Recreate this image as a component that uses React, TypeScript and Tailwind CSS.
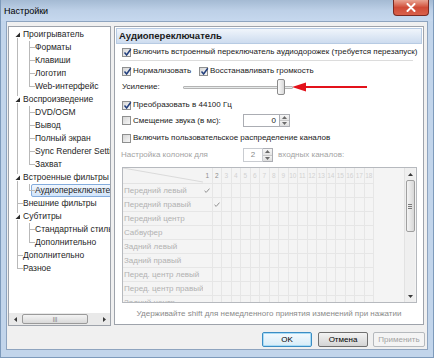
import React from "react";

type TreeItem = {
  label: string;
  child?: boolean;
  root: "down" | "full" | "up";
  branch?: "full" | "up";
  open?: boolean;
  selected?: boolean;
};

const tree: TreeItem[] = [
  { label: "Проигрыватель", root: "down", open: true },
  { label: "Форматы", child: true, root: "full", branch: "full" },
  { label: "Клавиши", child: true, root: "full", branch: "full" },
  { label: "Логотип", child: true, root: "full", branch: "full" },
  { label: "Web-интерфейс", child: true, root: "full", branch: "up" },
  { label: "Воспроизведение", root: "full", open: true },
  { label: "DVD/OGM", child: true, root: "full", branch: "full" },
  { label: "Вывод", child: true, root: "full", branch: "full" },
  { label: "Полный экран", child: true, root: "full", branch: "full" },
  { label: "Sync Renderer Settings", child: true, root: "full", branch: "full" },
  { label: "Захват", child: true, root: "full", branch: "up" },
  { label: "Встроенные фильтры", root: "full", open: true },
  { label: "Аудиопереключатель", child: true, root: "full", branch: "up", selected: true },
  { label: "Внешние фильтры", root: "full" },
  { label: "Субтитры", root: "full", open: true },
  { label: "Стандартный стиль", child: true, root: "full", branch: "full" },
  { label: "Дополнительно", child: true, root: "full", branch: "up" },
  { label: "Дополнительно", root: "full" },
  { label: "Разное", root: "up" },
];

const channels = [
  "Передний левый",
  "Передний правый",
  "Передний центр",
  "Сабвуфер",
  "Задний левый",
  "Задний правый",
  "Перед. центр левый",
  "Перед. центр правый",
  "Задний центр",
];

const cols = Array.from({ length: 18 }, (_, i) => i + 1);

const vline = {
  full: "top-0 bottom-0",
  down: "top-[6px] bottom-0",
  up: "top-0 h-[7px]",
};

function Gutter({ line, tick, open }: { line: "full" | "down" | "up"; tick?: boolean; open?: boolean }) {
  return (
    <span className="relative h-full w-[12px] shrink-0">
      <span className={`absolute left-[6px] w-px bg-[#b9b9b9] ${vline[line]}`} />
      {tick && <span className="absolute left-[6px] top-[6px] h-px w-[6px] bg-[#b9b9b9]" />}
      {open && (
        <svg className="absolute left-[3px] top-[3px] bg-white" width="7" height="7" viewBox="0 0 7 7">
          <path d="M6 1.5 L6 6 L1.5 6 Z" fill="#2b2b2b" />
        </svg>
      )}
    </span>
  );
}

function Check({ checked }: { checked?: boolean }) {
  return (
    <span className="relative flex h-[9px] w-[9px] shrink-0 items-center justify-center border border-[#8e8f8f] bg-gradient-to-br from-[#d6d6d6] to-[#f7f7f7]">
      {checked && (
        <svg className="absolute -top-[1px] left-0" width="9" height="9" viewBox="0 0 9 9">
          <path d="M1.5 4.6 L3.6 7 L7.8 1.2" stroke="#24407e" strokeWidth="1.5" fill="none" />
        </svg>
      )}
    </span>
  );
}

function SpinButtons() {
  return (
    <div className="flex w-[10px] flex-col border border-l-0 border-[#abadb3]">
      <div className="flex flex-1 items-center justify-center border-b border-[#c8c8c8] bg-gradient-to-b from-[#f7f7f7] to-[#e3e3e3]">
        <svg width="5" height="3" viewBox="0 0 5 3">
          <path d="M0 3 L2.5 0 L5 3 Z" fill="#6a6a6a" />
        </svg>
      </div>
      <div className="flex flex-1 items-center justify-center bg-gradient-to-b from-[#f2f2f2] to-[#dedede]">
        <svg width="5" height="3" viewBox="0 0 5 3">
          <path d="M0 0 L5 0 L2.5 3 Z" fill="#6a6a6a" />
        </svg>
      </div>
    </div>
  );
}

function Row({ className, children }: { className: string; children: React.ReactNode }) {
  return <div className={`flex items-center whitespace-nowrap ${className}`}>{children}</div>;
}

export default function App() {
  return (
    <div className="flex h-[358px] w-[434px] flex-col overflow-hidden border border-t-0 border-[#7d9abb] bg-[#c2d5eb] font-['Liberation_Sans',Arial,sans-serif] text-[8px] text-[#1a1a1a]">
      {/* title bar */}
      <div className="flex h-[21px] shrink-0 items-start justify-between bg-gradient-to-b from-[#a4bad3] via-[#bdd0e7] to-[#c6d8ee]">
        <span className="mt-[5px] pl-[3px] text-[9px] text-black">Настройки</span>
        <div className="mr-[4px] flex h-[16px] w-[36px] items-center justify-center rounded-b-[4px] border border-t-0 border-[#7a2a22] bg-gradient-to-b from-[#e8a493] via-[#cf4b37] to-[#d9604a]">
          <svg width="10" height="9" viewBox="0 0 10 9">
            <path d="M1.5 1 L8.5 8 M8.5 1 L1.5 8" stroke="#ffffff" strokeWidth="2" strokeLinecap="round" />
          </svg>
        </div>
      </div>

      {/* client area */}
      <div className="mx-[5px] flex h-[329px] shrink-0 flex-col border border-[#8ea4bf] bg-[#f0f0f0]">
        <div className="flex gap-[3px] pl-[1px] pr-[2px] pt-[4px]">
          {/* tree */}
          <div className="flex h-[300px] w-[103px] shrink-0 flex-col overflow-hidden border border-[#9ea3ab] bg-white">
            <div className="flex-1 overflow-hidden pl-[2px] pt-[1px] text-[8.5px] text-[#1e1e1e]">
              {tree.map((t, i) => (
                <div key={i} className="flex h-[13px] items-center whitespace-nowrap">
                  <Gutter line={t.root} tick={!t.child && !t.open} open={!t.child && t.open} />
                  {t.child && <Gutter line={t.branch ?? "full"} tick />}
                  {t.selected ? (
                    <span className="-ml-[4px] flex h-[13px] items-center rounded-[2px] border border-[#84acdd] bg-gradient-to-b from-[#f1f7fe] to-[#d1e4fa] pl-[3px] pr-[8px]">
                      {t.label}
                    </span>
                  ) : (
                    <span>{t.label}</span>
                  )}
                </div>
              ))}
            </div>
            {/* horizontal scrollbar */}
            <div className="flex h-[12px] shrink-0 items-center bg-[#e9e9e9]">
              <div className="flex w-[12px] justify-center">
                <svg width="3" height="5" viewBox="0 0 3 5">
                  <path d="M3 0 L0 2.5 L3 5 Z" fill="#3a3a3a" />
                </svg>
              </div>
              <div className="flex flex-1 items-center pl-[1px]">
                <div className="flex h-[10px] w-[66px] items-center justify-center rounded-[2px] border border-[#9a9a9a] bg-gradient-to-b from-[#f4f4f4] to-[#d9d9d9] text-[6px] leading-none text-[#6a6a6a]">
                  |||
                </div>
              </div>
              <div className="flex w-[12px] justify-center">
                <svg width="3" height="5" viewBox="0 0 3 5">
                  <path d="M0 0 L3 2.5 L0 5 Z" fill="#3a3a3a" />
                </svg>
              </div>
            </div>
          </div>

          {/* right panel */}
          <div className="flex h-[299px] w-[310px] shrink-0 flex-col border border-[#9ea3ab] bg-white">
            <div className="mx-[1px] mt-[1px] flex h-[16px] items-center border border-[#b7cbe3] bg-gradient-to-b from-[#f0f5fb] to-[#cddcef] pl-[2px] text-[9.5px] font-bold text-[#1b1b1b]">
              Аудиопереключатель
            </div>

            <div className="flex flex-col pl-[7px]">
              <Row className="mt-[3px] h-[10px] gap-[2px]">
                <Check checked />
                <span>Включить встроенный переключатель аудиодорожек (требуется перезапуск)</span>
              </Row>
              <div className="-ml-[2px] mt-[3px] h-px w-[293px] bg-[#dcdcdc]" />
              <Row className="mt-[5px] h-[10px]">
                <span className="flex w-[77px] items-center gap-[2px]">
                  <Check checked />
                  <span>Нормализовать</span>
                </span>
                <span className="flex items-center gap-[2px]">
                  <Check checked />
                  <span>Восстанавливать громкость</span>
                </span>
              </Row>
              <Row className="mt-[3px] h-[16px]">
                <span className="w-[61px] shrink-0">Усиление:</span>
                <div className="relative h-[16px] w-[110px] shrink-0">
                  <div className="absolute left-0 right-0 top-[7px] h-[3px] rounded-[1px] border border-[#b4b4b4] bg-[#e7eaea]" />
                  <div className="absolute left-[94px] top-0 h-[16px] w-[8px] rounded-[2px] border border-[#8b8b8b] bg-gradient-to-r from-[#fbfbfb] to-[#d8d8d8]" />
                </div>
                <svg className="-ml-[1px] shrink-0" width="76" height="12" viewBox="0 0 76 12">
                  <path d="M0 6 L14 1.5 L14 10.5 Z" fill="#e3121b" />
                  <path d="M12 6 L75 6" stroke="#e3121b" strokeWidth="2" />
                </svg>
              </Row>
              <Row className="mt-[5px] h-[10px] gap-[2px]">
                <Check checked />
                <span>Преобразовать в 44100 Гц</span>
              </Row>
              <Row className="mt-[4px] h-[13px]">
                <span className="flex w-[121px] items-center gap-[2px]">
                  <Check />
                  <span>Смещение звука (в мс):</span>
                </span>
                <div className="flex h-[13px]">
                  <div className="flex w-[37px] items-center justify-end border border-[#abadb3] bg-white pr-[3px]">0</div>
                  <SpinButtons />
                </div>
              </Row>
              <Row className="mt-[6px] h-[10px] gap-[2px]">
                <Check />
                <span>Включить пользовательское распределение каналов</span>
              </Row>
              <Row className="mt-[5px] h-[14px] text-[#a3a3a3]">
                <span className="-ml-[1px] w-[121px] shrink-0">Настройка колонок для</span>
                <div className="ml-[1px] flex h-[14px]">
                  <div className="flex w-[20px] items-center justify-center border border-[#c9ccd1] bg-white text-[#8a8a8a]">2</div>
                  <SpinButtons />
                </div>
                <span className="ml-[5px]">входных каналов:</span>
              </Row>

              {/* channel grid */}
              <div className="mt-[5px] flex h-[136px] w-[295px] overflow-hidden border border-[#b6b9be] bg-[#f4f4f4]">
                <div className="flex flex-1 flex-col overflow-hidden">
                  <div className="flex h-[16px] shrink-0">
                    <div className="w-[80px] shrink-0 border-b border-[#e3e3e3]">
                      <svg width="80" height="15" viewBox="0 0 80 15">
                        <path d="M0 0 L80 14" stroke="#dadada" strokeWidth="1" />
                      </svg>
                    </div>
                    {cols.map((c) => (
                      <div
                        key={c}
                        className={`flex w-[9.5px] shrink-0 items-center justify-center border-b border-r border-[#e6e6e6] text-[6.5px] ${c < 3 ? "text-[#8c8c8c]" : "text-[#d2d2d2]"}`}
                      >
                        {c}
                      </div>
                    ))}
                  </div>
                  {channels.map((ch, r) => (
                    <div key={ch} className="flex h-[14px] shrink-0">
                      <div className="flex w-[80px] shrink-0 items-center overflow-hidden whitespace-nowrap border-b border-[#e6e6e6] pl-[1px] text-[#b2b2b2]">
                        {ch}
                      </div>
                      {cols.map((c) => (
                        <div key={c} className="flex w-[9.5px] shrink-0 items-center justify-center border-b border-r border-[#e6e6e6]">
                          {r < 2 && c === r + 1 && (
                            <svg width="6" height="5" viewBox="0 0 6 5">
                              <path d="M0.5 2.8 L2.2 4.4 L5.5 0.6" stroke="#8f8f8f" strokeWidth="1" fill="none" />
                            </svg>
                          )}
                        </div>
                      ))}
                    </div>
                  ))}
                </div>
                {/* vertical scrollbar */}
                <div className="mr-[1px] flex w-[11px] shrink-0 flex-col items-center border-l border-[#e2e2e2] bg-[#efefef]">
                  <div className="flex h-[12px] items-center">
                    <svg width="5" height="3" viewBox="0 0 5 3">
                      <path d="M0 3 L2.5 0 L5 3 Z" fill="#3a3a3a" />
                    </svg>
                  </div>
                  <div className="flex h-[52px] w-[9px] flex-col items-center justify-center gap-[1px] rounded-[2px] border border-[#9f9f9f] bg-gradient-to-r from-[#f4f4f4] to-[#d8d8d8]">
                    <span className="h-px w-[4px] bg-[#7a7a7a]" />
                    <span className="h-px w-[4px] bg-[#7a7a7a]" />
                    <span className="h-px w-[4px] bg-[#7a7a7a]" />
                  </div>
                  <div className="flex-1" />
                  <div className="flex h-[12px] items-center">
                    <svg width="5" height="3" viewBox="0 0 5 3">
                      <path d="M0 0 L5 0 L2.5 3 Z" fill="#3a3a3a" />
                    </svg>
                  </div>
                </div>
              </div>
            </div>

            <div className="mt-[4px] flex h-[14px] items-center justify-center text-[#8a8a8a]">
              Удерживайте shift для немедленного принятия изменений при нажатии
            </div>
          </div>
        </div>

        {/* buttons */}
        <div className="mt-[6px] flex justify-end gap-[5px] pr-[2px]">
          <button className="mr-[1px] flex h-[15px] w-[50px] items-center justify-center rounded-[2px] border border-[#3b8dc4] bg-gradient-to-b from-[#f4fafe] to-[#d7ecf8] text-black shadow-[inset_0_0_0_1px_#a9dcf6]">
            OK
          </button>
          <button className="flex h-[15px] w-[50px] items-center justify-center rounded-[2px] border border-[#707070] bg-gradient-to-b from-[#f3f3f3] to-[#d4d4d4] text-black">
            Отмена
          </button>
          <button className="flex h-[15px] w-[52px] items-center justify-center rounded-[2px] border border-[#b5b9bd] bg-[#f4f4f4] text-[#a3a3a3]">
            Применить
          </button>
        </div>
      </div>
    </div>
  );
}
